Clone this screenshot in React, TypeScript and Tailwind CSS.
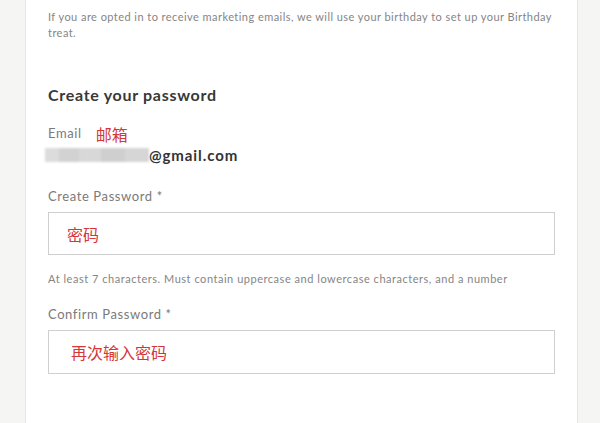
export default function App() {
  const font = { fontFamily: '"Lato", "Noto Sans CJK SC", sans-serif' };
  const cjk = { fontFamily: '"Noto Sans CJK SC", sans-serif' };
  return (
    <div className="w-[600px] h-[423px] overflow-hidden bg-[#f5f5f3]" style={font}>
      <div className="ml-[25px] w-[553px] h-[423px] bg-white border-x border-[#e6e6e6] px-[22px] pt-[9px]">
        <p className="text-[11px] leading-[16px] text-[#858585] tracking-[0.45px]">
          <span className="whitespace-nowrap">
            If you are opted in to receive marketing emails, we will use your birthday to set up your Birthday
          </span>
          <br />
          treat.
        </p>

        <h2 className="mt-[44px] text-[16px] leading-[20px] font-bold text-[#383838] tracking-[0.7px]">
          Create your password
        </h2>

        <div className="mt-[19px] flex items-center h-[20px]">
          <span className="text-[13px] text-[#7a7a7a] tracking-[0.6px]">Email</span>
          <span className="ml-[14px] text-[16px] text-[#d4363a]" style={cjk}>邮箱</span>
        </div>

        <div className="mt-[1px] flex items-center h-[20px] -ml-[3px]">
          <div className="w-[104px] h-[14px] flex blur-[1px]">
            <div className="w-[14px] bg-[#dcdcdc]" />
            <div className="w-[20px] bg-[#d2d2d2]" />
            <div className="w-[22px] bg-[#d8d8d8]" />
            <div className="w-[24px] bg-[#cfcfcf]" />
            <div className="w-[24px] bg-[#d6d6d6]" />
          </div>
          <span className="text-[15px] font-bold text-[#333] tracking-[0.9px]">@gmail.com</span>
        </div>

        <div className="mt-[21px] text-[13px] leading-[20px] text-[#7a7a7a] tracking-[0.6px]">Create Password *</div>
        <div className="mt-[6px] h-[43px] border border-[#cfcfcf] flex items-center pl-[18px]">
          <span className="text-[16px] text-[#d4363a]" style={cjk}>密码</span>
        </div>
        <p className="mt-[16px] text-[11px] leading-[16px] text-[#858585] tracking-[0.53px]">
          At least 7 characters. Must contain uppercase and lowercase characters, and a number
        </p>

        <div className="mt-[17px] text-[13px] leading-[20px] text-[#7a7a7a] tracking-[0.6px]">Confirm Password *</div>
        <div className="mt-[6px] h-[44px] border border-[#cfcfcf] flex items-center pl-[22px]">
          <span className="text-[16px] text-[#d4363a]" style={cjk}>再次输入密码</span>
        </div>
      </div>
    </div>
  );
}
